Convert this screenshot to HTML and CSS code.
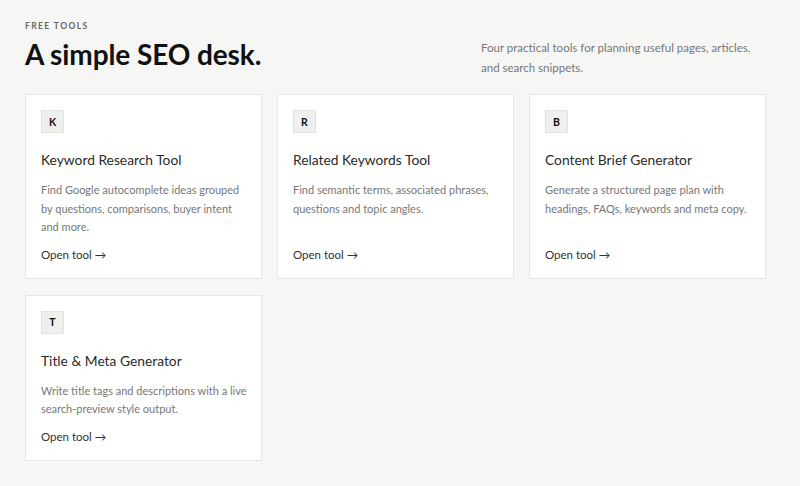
FILE: index.html
```html
<!DOCTYPE html>
<html lang="en">
<head>
    <meta charset="UTF-8">
    <meta name="viewport" content="width=device-width, initial-scale=1.0">
    <title>Free SEO Tools</title>
    <link rel="stylesheet" href="styles.css">
</head>
<body>
    <div class="wrap">
        <header class="intro">
            <div>
                <p class="eyebrow">FREE TOOLS</p>
                <h1>A simple SEO desk.</h1>
            </div>
            <p class="lede">Four practical tools for planning useful pages, articles, and search snippets.</p>
        </header>

        <div class="tools">
            <a class="tool-card" href="#">
                <span class="tool-badge">K</span>
                <h2>Keyword Research Tool</h2>
                <p>Find Google autocomplete ideas grouped by questions, comparisons, buyer intent and more.</p>
                <span class="tool-link">Open tool &rarr;</span>
            </a>
            <a class="tool-card" href="#">
                <span class="tool-badge">R</span>
                <h2>Related Keywords Tool</h2>
                <p>Find semantic terms, associated phrases, questions and topic angles.</p>
                <span class="tool-link">Open tool &rarr;</span>
            </a>
            <a class="tool-card" href="#">
                <span class="tool-badge">B</span>
                <h2>Content Brief Generator</h2>
                <p>Generate a structured page plan with headings, FAQs, keywords and meta copy.</p>
                <span class="tool-link">Open tool &rarr;</span>
            </a>
            <a class="tool-card" href="#">
                <span class="tool-badge">T</span>
                <h2>Title &amp; Meta Generator</h2>
                <p>Write title tags and descriptions with a live search-preview style output.</p>
                <span class="tool-link">Open tool &rarr;</span>
            </a>
        </div>
    </div>
</body>
</html>
```

FILE: styles.css
```css
body {
    margin: 0;
    background: #f6f6f4;
    color: #222;
    font-family: "Segoe UI", Lato, "Open Sans", sans-serif;
}
.wrap {
    padding: 20px 34px 24px 25px;
}
.intro {
    display: flex;
    justify-content: space-between;
    align-items: flex-start;
}
.eyebrow {
    margin: 0 0 5px;
    font-size: 8.5px;
    line-height: 12px;
    letter-spacing: 1.4px;
    font-weight: 700;
    color: #666;
}
h1 {
    margin: 0;
    font-size: 28px;
    line-height: 34px;
    font-weight: 700;
    letter-spacing: -0.1px;
    color: #111;
}
.lede {
    width: 285px;
    margin: 18px 0 0;
    font-size: 11.5px;
    line-height: 20px;
    color: #777;
}
.tools {
    display: grid;
    grid-template-columns: repeat(3, 1fr);
    gap: 16px 15px;
    margin-top: 16px;
}
.tool-card {
    display: flex;
    flex-direction: column;
    align-items: flex-start;
    padding: 15px 14px 14px 15px;
    background: #fff;
    border: 1px solid #e6e6e3;
    text-decoration: none;
    color: inherit;
}
.tool-badge {
    width: 23px;
    height: 23px;
    display: flex;
    align-items: center;
    justify-content: center;
    background: #efefed;
    border: 1px solid #e2e2df;
    box-sizing: border-box;
    font-size: 10.5px;
    font-weight: 700;
    color: #111;
}
.tool-card h2 {
    margin: 17px 0 0;
    font-size: 13.8px;
    line-height: 20px;
    font-weight: 400;
    color: #2a2a2a;
}
.tool-card p {
    margin: 11px 0 0;
    font-size: 11px;
    line-height: 18.5px;
    color: #777;
}
.tool-link {
    margin-top: auto;
    padding-top: 9px;
    font-size: 11.5px;
    line-height: 18px;
    color: #333;
}
```
